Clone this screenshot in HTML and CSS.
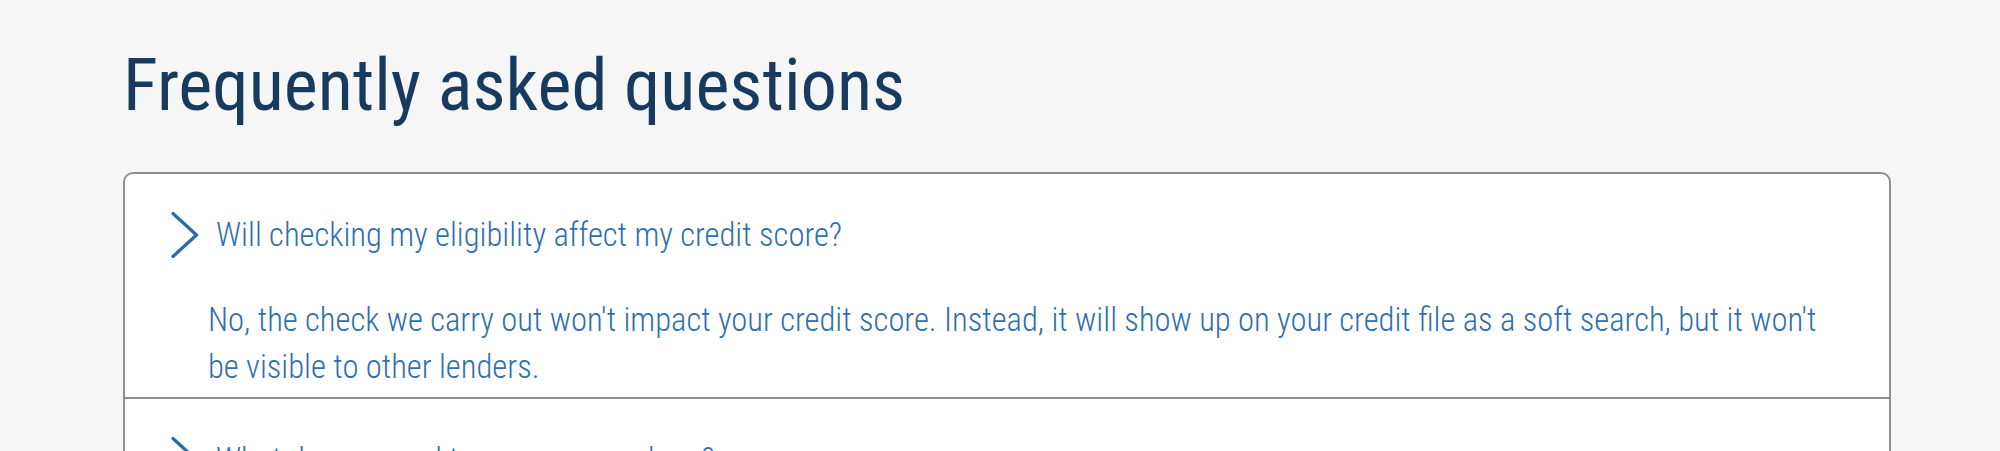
FILE: index.html
```html
<!DOCTYPE html>
<html lang="en">
<head>
<meta charset="utf-8">
<title>Frequently asked questions</title>
<link rel="stylesheet" href="styles.css">
</head>
<body>
<main class="page">
  <h1 class="faq-title">Frequently asked questions</h1>
  <div class="faq-list">
    <section class="faq-item is-open">
      <div class="faq-question">
        <svg class="faq-chevron" viewBox="0 0 28 46" width="28" height="46" aria-hidden="true">
          <polyline points="2,1.5 25.5,23 2,44.5" />
        </svg>
        <span class="faq-question-text">Will checking my eligibility affect my credit score?</span>
      </div>
      <p class="faq-answer">No, the check we carry out won't impact your credit score. Instead, it will show up on your credit file as a soft search, but it won't be visible to other lenders.</p>
    </section>
    <section class="faq-item">
      <div class="faq-question">
        <svg class="faq-chevron" viewBox="0 0 28 46" width="28" height="46" aria-hidden="true">
          <polyline points="2,1.5 25.5,23 2,44.5" />
        </svg>
        <span class="faq-question-text">What do you need to arrange your loan?</span>
      </div>
    </section>
  </div>
</main>
</body>
</html>
```
FILE: styles.css
```css
html, body {
  margin: 0;
  padding: 0;
  background: #f6f6f6;
}

body {
  font-family: "Roboto Condensed", "Open Sans", sans-serif;
  font-weight: 300;
}

.page {
  margin-left: 123px;
  width: 1768px;
  padding-top: 46px;
}

.faq-title {
  margin: 0 0 46px;
  font-size: 72.5px;
  line-height: 80px;
  font-weight: 400;
  color: #183a5e;
}

.faq-list {
  background: #ffffff;
  border: 2px solid #8e8e8e;
  border-radius: 10px;
}

.faq-item + .faq-item {
  border-top: 2px solid #8e8e8e;
}

.faq-question {
  display: flex;
  align-items: center;
  padding: 38px 0 0 46px;
  height: 46px;
  color: #2f6fb0;
}

.faq-chevron {
  flex: none;
  fill: none;
  stroke: #2b6aa8;
  stroke-width: 3.2;
  stroke-linecap: round;
  stroke-linejoin: round;
}

.faq-question-text {
  margin-left: 17px;
  font-size: 32.6px;
  line-height: 46px;
  white-space: nowrap;
}

.faq-answer {
  margin: 39px 0 0;
  padding: 0 56px 6px 83px;
  font-size: 32.6px;
  line-height: 47px;
  color: #2f6fb0;
}
```
